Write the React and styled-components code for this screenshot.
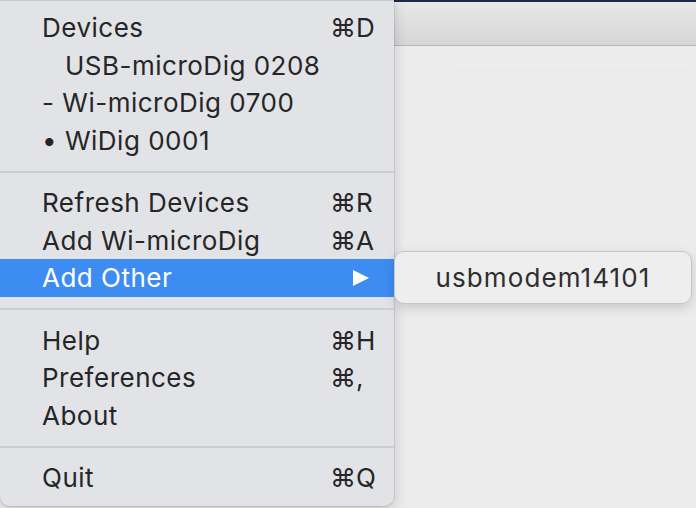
import React from 'react';
import styled, { createGlobalStyle } from 'styled-components';

const GlobalStyle = createGlobalStyle`
  html, body {
    margin: 0;
    padding: 0;
    width: 696px;
    height: 508px;
    overflow: hidden;
    background: #ececec;
  }
`;

// menu data
const groups = [
  [
    { id: 'devices', label: 'Devices', key: '⌘D' },
    { id: 'usb', label: 'USB-microDig 0208', indent: true },
    { id: 'wi', label: '- Wi-microDig 0700' },
    { id: 'widig', label: '• WiDig 0001' },
  ],
  [
    { id: 'refresh', label: 'Refresh Devices', key: '⌘R' },
    { id: 'addwi', label: 'Add Wi-microDig', key: '⌘A' },
    { id: 'other', label: 'Add Other', submenu: ['usbmodem14101'], active: true },
  ],
  [
    { id: 'help', label: 'Help', key: '⌘H' },
    { id: 'prefs', label: 'Preferences', key: '⌘,' },
    { id: 'about', label: 'About' },
  ],
  [{ id: 'quit', label: 'Quit', key: '⌘Q' }],
];

const App = () => {
  return (
    <Desktop>
      <GlobalStyle />
      <MenuBarEdge />
      <TitleBar />
      <WindowBody>
        <FaintRule />
      </WindowBody>

      <Menu>
        {groups.map((group, gi) => (
          <React.Fragment key={gi}>
            {gi > 0 && <Separator />}
            {group.map(item => (
              <Row key={item.id} $active={item.active}>
                <Label $indent={item.indent}>{item.label}</Label>
                {item.key && <Shortcut>{item.key}</Shortcut>}
                {item.submenu && (
                  <>
                    <Arrow viewBox="0 0 18 18">
                      <polygon points="1,1 17,9 1,17" fill="#fff" />
                    </Arrow>
                    <Submenu>
                      {item.submenu.map(s => (
                        <SubItem key={s}>{s}</SubItem>
                      ))}
                    </Submenu>
                  </>
                )}
              </Row>
            ))}
          </React.Fragment>
        ))}
      </Menu>
    </Desktop>
  );
};

export default App;

const Desktop = styled.div`
  position: relative;
  width: 696px;
  height: 508px;
  display: flex;
  flex-direction: column;
  background: #ececec;
  font-family: 'Inter', 'Noto Sans', 'DejaVu Sans', sans-serif;
`;

const MenuBarEdge = styled.div`
  height: 2px;
  background: #1d2a45;
`;

const TitleBar = styled.div`
  height: 43px;
  background: linear-gradient(to bottom, #e8e8e8 0%, #d6d6d6 100%);
  border-bottom: 1px solid #b8b8b8;
`;

const WindowBody = styled.div`
  flex: 1;
  background: #ececec;
  padding: 24px 0 0 450px;
`;

const FaintRule = styled.div`
  height: 1px;
  width: 240px;
  background: #e8e8e8;
`;

const Menu = styled.div`
  position: absolute;
  top: 0;
  left: 0;
  width: 394px;
  box-sizing: border-box;
  padding: 8px 0 9px;
  background: #e2e3e6;
  border-top: 1px solid #c9cacd;
  border-radius: 0 0 10px 10px;
  box-shadow: 0 4px 14px rgba(0, 0, 0, 0.18), 0 0 0 1px rgba(0, 0, 0, 0.08);
`;

const Row = styled.div`
  position: relative;
  height: 37.5px;
  display: flex;
  align-items: center;
  padding: 0 18px 0 42px;
  font-size: 26px;
  letter-spacing: 0.5px;
  color: ${p => (p.$active ? '#ffffff' : '#262626')};
  background: ${p => (p.$active ? '#3d8cf1' : 'transparent')};
`;

const Label = styled.span`
  flex: 1;
  white-space: nowrap;
  padding-left: ${p => (p.$indent ? '23px' : '0')};
`;

const Shortcut = styled.span`
  width: 46px;
  white-space: nowrap;
  letter-spacing: 0;
`;

const Arrow = styled.svg`
  width: 18px;
  height: 18px;
  margin-right: 6px;
`;

const Separator = styled.div`
  height: 2px;
  margin: 11.5px 0;
  background: #cdced1;
`;

const Submenu = styled.div`
  position: absolute;
  left: 100%;
  top: -8px;
  width: 298px;
  height: 53px;
  box-sizing: border-box;
  display: flex;
  align-items: center;
  justify-content: center;
  background: #eeeeee;
  border: 1px solid #c6c6c6;
  border-radius: 10px;
  box-shadow: 0 4px 12px rgba(0, 0, 0, 0.15);
`;

const SubItem = styled.span`
  font-size: 26px;
  letter-spacing: 1.1px;
  color: #2e2e2e;
`;
